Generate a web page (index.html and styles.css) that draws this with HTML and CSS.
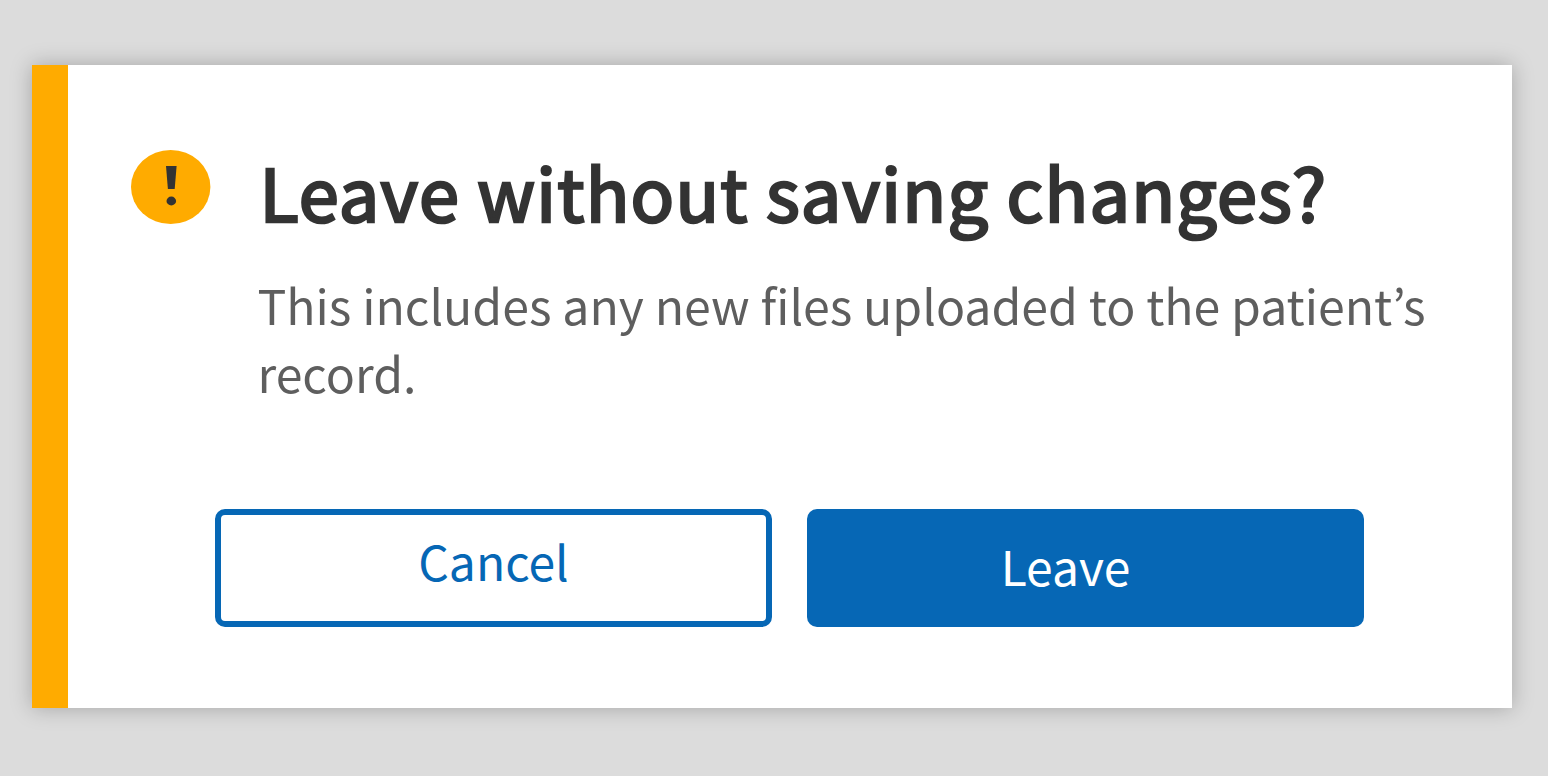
FILE: index.html
```html
<!DOCTYPE html>
<html lang="en">
<head>
<meta charset="utf-8">
<title>Leave without saving changes?</title>
<link rel="stylesheet" href="styles.css">
</head>
<body>
<div class="dialog">
  <div class="content">
    <div class="header">
      <svg class="icon" viewBox="0 0 80 74" aria-hidden="true">
        <ellipse cx="39.7" cy="37" rx="39.7" ry="37" fill="#ffab00"/>
        <path d="M35 16h10.6l-1.9 23h-6.8z" fill="#333"/>
        <ellipse cx="40.3" cy="51" rx="4.8" ry="4.4" fill="#333"/>
      </svg>
      <div class="text">
        <h1 class="title">Leave without saving changes?</h1>
        <p class="message">This includes any new files uploaded to the patient’s record.</p>
      </div>
    </div>
    <div class="actions">
      <button class="btn btn-secondary">Cancel</button>
      <button class="btn btn-primary">Leave</button>
    </div>
  </div>
</div>
</body>
</html>
```
FILE: styles.css
```css
* { box-sizing: border-box; }
html, body { margin: 0; height: 100%; }
body {
  background: #dcdcdc;
  padding: 65px 36px 68px 32px;
  font-family: "Noto Sans CJK KR", "Noto Sans", sans-serif;
  overflow: hidden;
}
.dialog {
  height: 643px;
  background: #fff;
  border-left: 36px solid #ffab00;
  box-shadow: 0 0 20px rgba(0, 0, 0, 0.25);
}
.content { padding: 85px 60px 0 63px; }
.header { display: flex; gap: 46.5px; }
.icon { width: 80px; height: 74px; flex: none; }
.text { flex: 1; margin-top: -4px; }
.title {
  margin: 0 0 0 2px;
  font-size: 72px;
  line-height: 90px;
  font-weight: 400;
  letter-spacing: 1.2px;
  -webkit-text-stroke: 2.6px #333;
  color: #333;
}
.message {
  margin: 34px 0 0;
  font-size: 48.2px;
  line-height: 68px;
  color: #5e5e5e;
}
.actions {
  display: flex;
  gap: 35px;
  margin: 0 0 0 84px;
  margin-top: 103px;
}
.btn {
  flex: none;
  width: 557px;
  height: 118px;
  border-radius: 10px;
  font-family: inherit;
  font-size: 48px;
  line-height: 68px;
  padding: 0;
}
.btn-secondary { background: #fff; border: 6px solid #0667b5; color: #0667b5; padding-bottom: 16px; }
.btn-primary { background: #0667b5; border: 0; color: #fff; padding: 0 40px 6px 0; }
```
